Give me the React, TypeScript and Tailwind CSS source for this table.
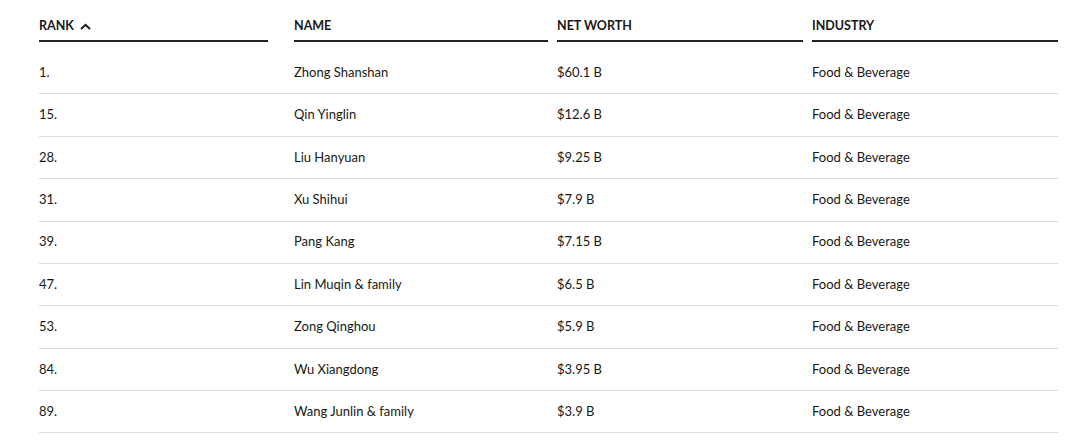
const rows = [
  { rank: "1.", name: "Zhong Shanshan", worth: "$60.1 B" },
  { rank: "15.", name: "Qin Yinglin", worth: "$12.6 B" },
  { rank: "28.", name: "Liu Hanyuan", worth: "$9.25 B" },
  { rank: "31.", name: "Xu Shihui", worth: "$7.9 B" },
  { rank: "39.", name: "Pang Kang", worth: "$7.15 B" },
  { rank: "47.", name: "Lin Muqin & family", worth: "$6.5 B" },
  { rank: "53.", name: "Zong Qinghou", worth: "$5.9 B" },
  { rank: "84.", name: "Wu Xiangdong", worth: "$3.95 B" },
  { rank: "89.", name: "Wang Junlin & family", worth: "$3.9 B" },
]

export default function App() {
  return (
    <div className="min-h-[443px] bg-white pl-[39px] pr-[22px] text-[#181818] font-['Lato','Noto_Sans',sans-serif]">
      <div className="grid grid-cols-[255px_263px_255px_246px] text-[12.5px] font-bold uppercase">
        <div className="mr-[26px] flex items-center gap-[6px] border-b-2 border-[#222] pt-[18px] pb-[6px] leading-4">
          Rank
          <svg width="11" height="7" viewBox="0 0 11 7" fill="none">
            <path d="M1 6L5.5 1.8L10 6" stroke="#181818" strokeWidth="2" />
          </svg>
        </div>
        <div className="mr-[9px] border-b-2 border-[#222] pt-[18px] pb-[6px] leading-4">Name</div>
        <div className="mr-[9px] border-b-2 border-[#222] pt-[18px] pb-[6px] leading-4">Net Worth</div>
        <div className="border-b-2 border-[#222] pt-[18px] pb-[6px] leading-4">Industry</div>
      </div>
      <div className="mt-[10px] text-[13px]">
        {rows.map((r) => (
          <div
            key={r.rank}
            className="grid h-[42.375px] grid-cols-[255px_263px_255px_246px] items-center border-b border-[#d9d9d9]"
          >
            <div>{r.rank}</div>
            <div>{r.name}</div>
            <div>{r.worth}</div>
            <div>Food &amp; Beverage</div>
          </div>
        ))}
      </div>
    </div>
  )
}
